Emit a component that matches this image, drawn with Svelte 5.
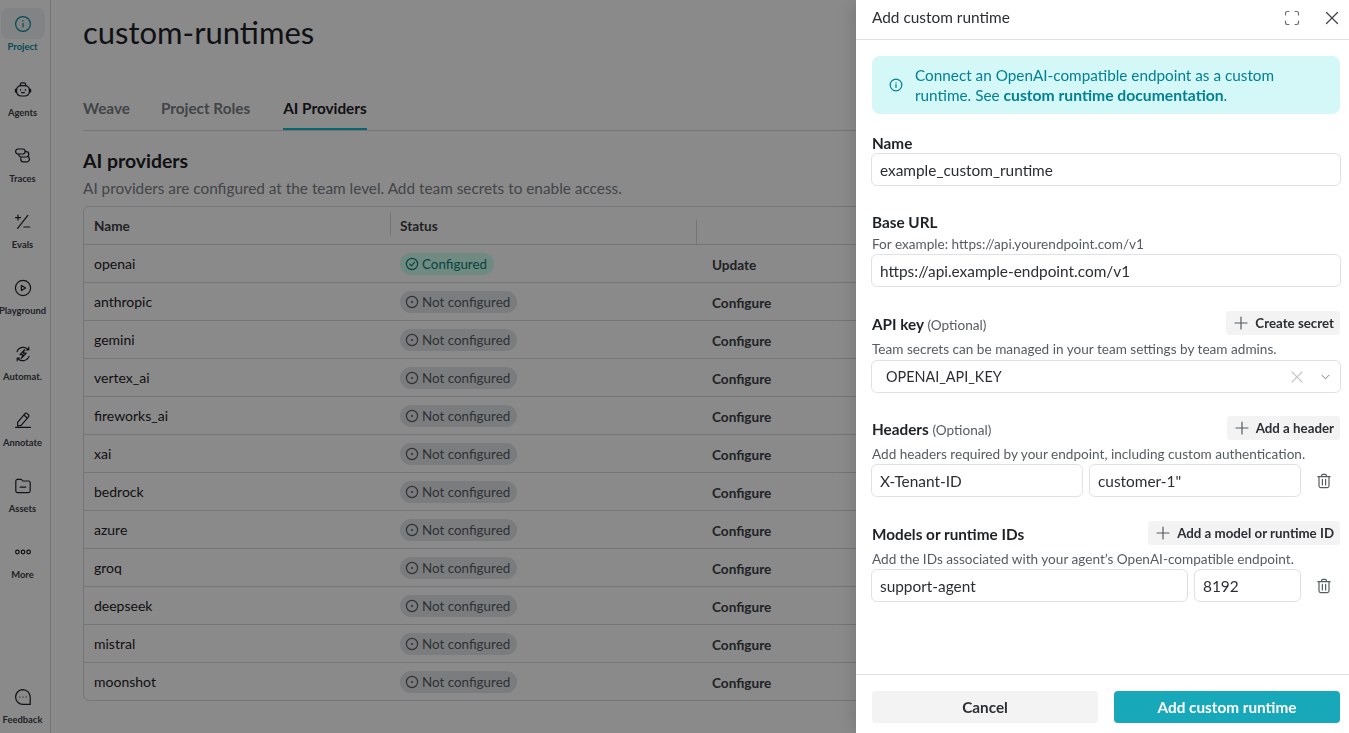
<script>
	const nav = [
		{ label: 'Project', icon: 'info', active: true },
		{ label: 'Agents', icon: 'robot' },
		{ label: 'Traces', icon: 'traces' },
		{ label: 'Evals', icon: 'evals' },
		{ label: 'Playground', icon: 'play' },
		{ label: 'Automat.', icon: 'auto' },
		{ label: 'Annotate', icon: 'pencil' },
		{ label: 'Assets', icon: 'folder' },
		{ label: 'More', icon: 'more' }
	];

	const icons = {
		info: '<circle cx="9" cy="9" r="7.4"/><path d="M9 8.4v3.6M9 5.7v.3"/>',
		robot: '<rect x="2.6" y="4.6" width="12.8" height="10.4" rx="4.4"/><path d="M6.4 4.6V3.4c0-.9.7-1.6 1.6-1.6h2c.9 0 1.6.7 1.6 1.6v1.2M6.6 8.6v.6M11.4 8.6v.6M7.6 11.6h2.8M2.6 8.4H1.4v2.6h1.2M15.4 8.4h1.2v2.6h-1.2"/>',
		traces: '<rect x="1.6" y="2" width="9.6" height="5" rx="2.5"/><path d="M11.2 4.6h.9a2.7 2.7 0 0 1 0 5.4H7.4a2.5 2.5 0 0 1-2.6-3M13.6 9.4a2.6 2.6 0 0 1 1.8 2.3v.6a2.6 2.6 0 0 1-2.6 2.6H9.4a2.6 2.6 0 0 1-2.6-2.6V10"/>',
		evals: '<path d="M1.5 4.6h5M4 2.1v5M13.8 2.4 3.6 15.4M9.8 14h6"/>',
		play: '<circle cx="9" cy="9" r="7.6"/><path d="M7.4 6.4v5.2L11.6 9z"/>',
		auto: '<path d="M3 6.6A6.8 6.8 0 0 1 14.6 4.8M15 11.4A6.8 6.8 0 0 1 3.4 13.2M14.8 2.2v2.8H12M3.2 15.8V13H6M10.4 4.8 6 9.6h3l-1.4 3.6 4.6-5H9.2z"/>',
		pencil: '<path d="M3.6 11.4 11 2.6c.5-.6 1.3-.7 1.9-.2l1.5 1.3c.6.5.7 1.3.2 1.9l-7.4 8.8-3.5.6zM9.8 4l3.8 3.2M1.6 16.4h14.8"/>',
		folder: '<path d="M1.8 4.2c0-1 .8-1.8 1.8-1.8h3.2c.5 0 .9.2 1.2.6l.8 1h5.6c1 0 1.8.8 1.8 1.8v8c0 1-.8 1.8-1.8 1.8H3.6c-1 0-1.8-.8-1.8-1.8zM6.2 10.2h5.6"/>',
		more: '<circle cx="3.4" cy="9" r="1.8"/><circle cx="9" cy="9" r="1.8"/><circle cx="14.6" cy="9" r="1.8"/>',
		chat: '<path d="M9 1.6a7.4 7.4 0 1 0 0 14.8h7.2V9A7.4 7.4 0 0 0 9 1.6z"/><path d="M5.8 9h.1M9 9h.1M12.2 9h.1"/>'
	};

	const providers = [
		'anthropic', 'gemini', 'vertex_ai', 'fireworks_ai', 'xai', 'bedrock',
		'azure', 'groq', 'deepseek', 'mistral', 'moonshot'
	];
</script>

{#snippet trash()}
	<svg class="trash" viewBox="0 0 16 16" width="16" height="16">
		<path d="M1.8 3.6h12.4M5.6 3.4V2.6c0-.7.5-1.2 1.2-1.2h2.4c.7 0 1.2.5 1.2 1.2v.8M3 3.6v9.2c0 1 .8 1.8 1.8 1.8h6.4c1 0 1.8-.8 1.8-1.8V3.6M6.4 6.4v5.6M9.6 6.4v5.6" />
	</svg>
{/snippet}

{#snippet plus()}
	<svg class="plus" viewBox="0 0 14 14" width="14" height="14"><path d="M7 1v12M1 7h12" /></svg>
{/snippet}

<div class="page">
	<nav class="sidebar">
		{#each nav as item}
			<div class="nav-item" class:active={item.active}>
				<div class="nav-icon">
					<svg viewBox="0 0 18 18" width="18" height="18">{@html icons[item.icon]}</svg>
				</div>
				<span>{item.label}</span>
			</div>
		{/each}
		<div class="nav-item feedback">
			<div class="nav-icon">
				<svg viewBox="0 0 18 18" width="18" height="18">{@html icons.chat}</svg>
			</div>
			<span>Feedback</span>
		</div>
	</nav>

	<main class="content">
		<h1>custom-runtimes</h1>
		<div class="tabs">
			<span class="tab">Weave</span>
			<span class="tab">Project Roles</span>
			<span class="tab selected">AI Providers</span>
		</div>
		<h2>AI providers</h2>
		<p class="sub">AI providers are configured at the team level. Add team secrets to enable access.</p>

		<div class="table">
			<div class="row head">
				<div class="cell name">Name</div>
				<div class="cell status"><i></i>Status</div>
				<div class="cell action"><i></i></div>
			</div>
			<div class="row">
				<div class="cell name">openai</div>
				<div class="cell status">
					<span class="pill ok">
						<svg viewBox="0 0 14 14" width="14" height="14"><circle cx="7" cy="7" r="5.6" /><path d="M4.8 7.2 6.4 8.8 9.4 5.4" /></svg>
						Configured
					</span>
				</div>
				<div class="cell action link">Update</div>
			</div>
			{#each providers as name}
				<div class="row">
					<div class="cell name">{name}</div>
					<div class="cell status">
						<span class="pill">
							<svg viewBox="0 0 14 14" width="14" height="14"><circle cx="7" cy="7" r="5.6" /><circle class="dot" cx="7" cy="7" r="1.1" /></svg>
							Not configured
						</span>
					</div>
					<div class="cell action link">Configure</div>
				</div>
			{/each}
		</div>
	</main>
</div>

<div class="overlay"></div>

<aside class="drawer">
	<header>
		<span>Add custom runtime</span>
		<div class="header-icons">
			<svg viewBox="0 0 16 16" width="16" height="16">
				<path d="M1.5 5V3.2c0-.9.8-1.7 1.7-1.7H5M11 1.5h1.8c.9 0 1.7.8 1.7 1.7V5M14.5 11v1.8c0 .9-.8 1.7-1.7 1.7H11M5 14.5H3.2c-.9 0-1.7-.8-1.7-1.7V11" />
			</svg>
			<svg class="close" viewBox="0 0 16 16" width="16" height="16"><path d="M2.5 2.5l11 11M13.5 2.5l-11 11" /></svg>
		</div>
	</header>

	<div class="body">
		<div class="callout">
			<svg viewBox="0 0 14 14" width="14" height="14"><circle cx="7" cy="7" r="5.8" /><path d="M7 6.4v3M7 4.5v.2" /></svg>
			<p>Connect an OpenAI-compatible endpoint as a custom runtime. See <b>custom runtime documentation</b>.</p>
		</div>

		<section class="field first">
			<div class="label-row"><label for="rt-name">Name</label></div>
			<input id="rt-name" value="example_custom_runtime" />
		</section>

		<section class="field base">
			<div class="label-row"><label for="rt-url">Base URL</label></div>
			<small>For example: https://api.yourendpoint.com/v1</small>
			<input id="rt-url" value="https://api.example-endpoint.com/v1" />
		</section>

		<section class="field">
			<div class="label-row">
				<label for="rt-key">API key <em>(Optional)</em></label>
				<button class="add">{@render plus()}Create secret</button>
			</div>
			<small>Team secrets can be managed in your team settings by team admins.</small>
			<div class="select">
				<span id="rt-key">OPENAI_API_KEY</span>
				<svg class="clear" viewBox="0 0 12 12" width="12" height="12"><path d="M1 1l10 10M11 1 1 11" /></svg>
				<svg class="chev" viewBox="0 0 10 6" width="9" height="6"><path d="M1 1l4 4 4-4" /></svg>
			</div>
		</section>

		<section class="field headers">
			<div class="label-row">
				<label for="rt-header">Headers <em>(Optional)</em></label>
				<button class="add">{@render plus()}Add a header</button>
			</div>
			<small>Add headers required by your endpoint, including custom authentication.</small>
			<div class="pair">
				<input id="rt-header" class="key" value="X-Tenant-ID" />
				<input class="val" value={'customer-1"'} />
				{@render trash()}
			</div>
		</section>

		<section class="field">
			<div class="label-row">
				<label for="rt-model">Models or runtime IDs</label>
				<button class="add">{@render plus()}Add a model or runtime ID</button>
			</div>
			<small>Add the IDs associated with your agent’s OpenAI-compatible endpoint.</small>
			<div class="pair">
				<input id="rt-model" class="model" value="support-agent" />
				<input class="tokens" value="8192" />
				{@render trash()}
			</div>
		</section>
	</div>

	<footer>
		<button class="cancel">Cancel</button>
		<button class="submit">Add custom runtime</button>
	</footer>
</aside>

<style>
	:global(body) {
		margin: 0;
		overflow: hidden;
		background: #fff;
		font-family: 'Lato', 'Noto Sans', sans-serif;
		color: #1e2125;
	}

	svg {
		fill: none;
		stroke: currentColor;
		stroke-width: 1.2;
		stroke-linecap: round;
		stroke-linejoin: round;
		flex: none;
	}

	.page {
		display: flex;
		height: 733px;
		overflow: hidden;
	}

	.sidebar {
		width: 45px;
		padding: 8px 5px 0 0;
		flex: none;
		border-right: 1px solid #d6d8dc;
		display: flex;
		flex-direction: column;
		color: #3c4046;
	}

	.nav-item {
		height: 66px;
		display: flex;
		flex-direction: column;
		align-items: center;
		font-size: 9.4px;
		font-weight: 700;
		white-space: nowrap;
	}

	.nav-icon {
		width: 44px;
		height: 31px;
		flex: none;
		border-radius: 8px;
		display: flex;
		align-items: center;
		justify-content: center;
		margin-bottom: 1px;
		color: #1e2125;
	}

	.nav-item span {
		line-height: 13px;
	}

	.nav-item.active {
		color: #058a9b;
	}

	.nav-item.active .nav-icon {
		background: #f0f2f4;
		color: #058a9b;
	}

	.feedback {
		margin-top: auto;
		height: 52px;
	}

	.content {
		flex: none;
		width: 1266px;
		padding-left: 32px;
		box-sizing: border-box;
	}

	h1 {
		margin: 0;
		padding-top: 12px;
		font-size: 31px;
		line-height: 40px;
		font-weight: 400;
	}

	.tabs {
		display: flex;
		gap: 31px;
		margin-top: 37px;
		height: 41px;
		border-bottom: 1px solid #d6d8dc;
	}

	.tab {
		font-size: 15.3px;
		font-weight: 700;
		line-height: 38px;
		color: #7b7f86;
		height: 41px;
		box-sizing: border-box;
	}

	.tab.selected {
		color: #1e2125;
		border-bottom: 2px solid #10bfcc;
		margin-left: 2px;
	}

	h2 {
		margin: 18px 0 0;
		font-size: 19.4px;
		line-height: 24px;
		font-weight: 700;
	}

	.sub {
		margin: 5px 0 0;
		font-size: 15.35px;
		line-height: 20px;
		color: #7b7f86;
	}

	.table {
		margin-top: 8px;
		width: 1266px;
		border: 1px solid #d6d8dc;
		border-radius: 6px;
	}

	.row {
		display: flex;
		height: 38px;
		border-top: 1px solid #d6d8dc;
		box-sizing: border-box;
		align-items: center;
	}

	.row.head {
		border-top: 0;
		height: 37px;
		font-weight: 700;
		color: #3c4046;
	}

	.cell {
		padding-left: 10px;
		box-sizing: border-box;
		font-size: 14px;
	}

	.head .cell {
		font-size: 13.6px;
		position: relative;
	}

	.head i {
		position: absolute;
		left: 0;
		top: -6px;
		width: 1px;
		height: 24px;
		background: #d6d8dc;
	}

	.name {
		width: 306px;
	}

	.status {
		width: 306px;
	}

	.action {
		padding-left: 16px;
	}

	.link {
		font-size: 13.6px;
		font-weight: 700;
		color: #3c4046;
		padding-top: 2px;
	}

	.pill {
		display: inline-flex;
		align-items: center;
		gap: 3px;
		height: 22px;
		padding: 0 7px 0 5px;
		border-radius: 11px;
		background: #e4e6e9;
		color: #565c63;
		font-size: 13.4px;
	}

	.pill.ok {
		background: #ccffee;
		color: #0f7d75;
	}

	.dot {
		fill: currentColor;
		stroke: none;
	}

	.overlay {
		position: fixed;
		inset: 0;
		background: rgba(0, 0, 0, 0.46);
	}

	.drawer {
		position: fixed;
		top: 0;
		right: 0;
		bottom: 0;
		width: 493px;
		background: #fff;
		box-shadow: 0 0 20px rgba(0, 0, 0, 0.18);
		display: flex;
		flex-direction: column;
	}

	.drawer header {
		height: 40px;
		flex: none;
		border-bottom: 1px solid #dfe1e4;
		box-sizing: border-box;
		padding: 0 9px 5px 16px;
		display: flex;
		align-items: center;
		justify-content: space-between;
		font-size: 15.4px;
		color: #2b2e33;
	}

	.header-icons {
		display: flex;
		gap: 24px;
		color: #6b7077;
		padding-top: 2px;
	}

	.header-icons .close {
		color: #3c4046;
	}

	.body {
		flex: 1;
		padding: 16px 9px 0 16px;
	}

	.callout {
		display: flex;
		align-items: center;
		gap: 12px;
		height: 58px;
		padding: 0 16px 0 17px;
		background: #d4f7f8;
		border-radius: 8px;
		color: #038194;
		box-sizing: border-box;
	}

	.callout p {
		margin: 0;
		font-size: 15.3px;
		line-height: 20px;
		max-width: 380px;
	}

	.callout b {
		font-size: 15.7px;
	}

	.field {
		margin-top: 24px;
	}

	.field.first {
		margin-top: 19px;
	}

	.field.base {
		margin-top: 26px;
	}

	.field.headers {
		margin-top: 23px;
	}

	.label-row {
		display: flex;
		justify-content: space-between;
		align-items: center;
		min-height: 20px;
	}

	label {
		font-size: 15.3px;
		font-weight: 700;
		line-height: 20px;
	}

	label em {
		font-style: normal;
		font-weight: 400;
		font-size: 13.6px;
		color: #565c63;
	}

	small {
		display: block;
		font-size: 13.6px;
		line-height: 20px;
		color: #565c63;
		margin-top: 2px;
	}

	input,
	.select {
		display: block;
		width: calc(100% + 2px);
		margin-left: -1px;
		height: 33px;
		box-sizing: border-box;
		border: 1px solid #dfe1e4;
		border-radius: 6px;
		padding: 0 8px;
		font-family: inherit;
		font-size: 15.4px;
		color: #2b2e33;
		background: #fff;
	}

	.select {
		display: flex;
		align-items: center;
		margin-top: 1px;
		padding: 0 10px 0 14px;
		font-size: 14.4px;
	}

	.select span {
		flex: 1;
	}

	.clear {
		color: #c4c7cb;
		margin-right: 18px;
	}

	.chev {
		color: #6b7077;
		stroke-width: 1;
	}

	.add {
		display: inline-flex;
		align-items: center;
		align-self: flex-start;
		gap: 7px;
		height: 24px;
		margin-bottom: 2px;
		padding: 0 6px 0 8px;
		border: 0;
		border-radius: 4px;
		background: #f3f3f3;
		font-family: inherit;
		font-size: 13.3px;
		font-weight: 700;
		color: #2b2e33;
	}

	.plus {
		color: #565c63;
	}

	.pair {
		display: flex;
		align-items: center;
		gap: 6px;
	}

	.pair input {
		flex: none;
	}

	.pair .key,
	.pair .val {
		width: 212px;
	}

	.pair .val,
	.pair .tokens {
		margin-left: 0;
	}

	.pair .model {
		width: 317px;
	}

	.pair .tokens {
		width: 107px;
	}

	.trash {
		color: #565c63;
		margin-left: 9px;
	}

	.drawer footer {
		height: 59px;
		flex: none;
		border-top: 1px solid #dfe1e4;
		box-sizing: border-box;
		padding: 16px 9px 0 16px;
		display: flex;
		gap: 16px;
	}

	footer button {
		flex: 1;
		height: 32px;
		border: 0;
		border-radius: 4px;
		font-family: inherit;
		font-size: 15.3px;
		font-weight: 700;
	}

	.cancel {
		background: #f3f3f3;
		color: #2b2e33;
	}

	.submit {
		background: #17a9ba;
		color: #fff;
	}
</style>
